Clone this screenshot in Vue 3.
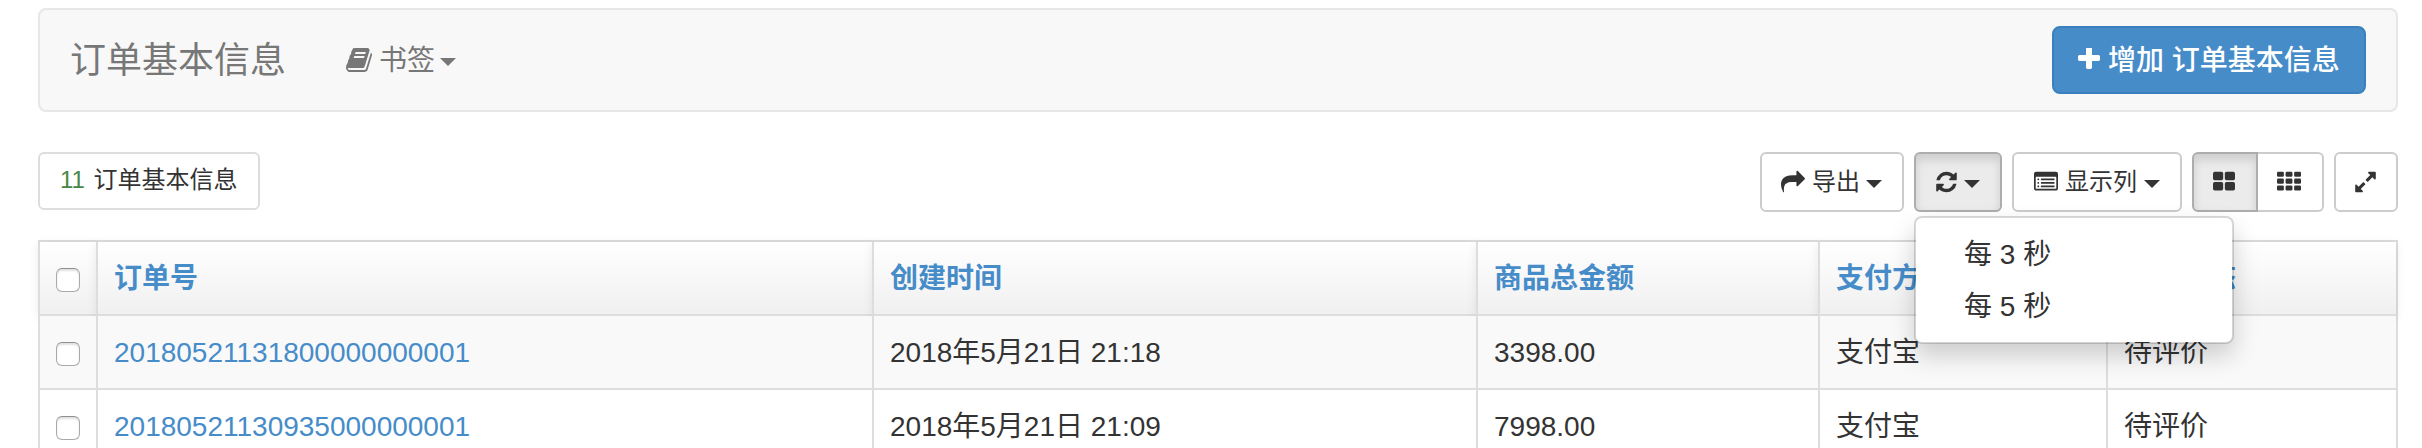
<script setup>
const columns = ['订单号', '创建时间', '商品总金额', '支付方式', '订单状态']
const orders = [
  { id: '20180521131800000000001', created: '2018年5月21日 21:18', total: '3398.00', pay: '支付宝', status: '待评价' },
  { id: '20180521130935000000001', created: '2018年5月21日 21:09', total: '7998.00', pay: '支付宝', status: '待评价' },
]
const intervals = ['每 3 秒', '每 5 秒']
</script>

<template>
  <div class="page">
    <nav class="navbar">
      <span class="brand">订单基本信息</span>
      <a class="bookmark">
        <svg class="ico-book" viewBox="64 0 1664 1792"><path d="M1703 478q40 57 18 129l-275 906q-19 64-76.500 107.500t-122.500 43.500h-923q-77 0-148.500-53.500t-99.500-131.500q-24-67-2-127 0-4 3-27t4-37q1-8-3-21.500t-3-19.500q2-11 8-21t16.500-23.500 16.500-23.500q23-38 45-91.500t30-91.500q3-10 .5-30t-.5-28q3-11 17-28t17-23q21-36 42-92t25-90q1-9-2.500-32t.5-28q4-13 22-30.500t22-22.500q19-26 42.500-84.500t27.500-96.500q1-8-3-25.500t-2-26.500q2-8 9-18t18-23 17-21q8-12 16.500-30.500t15-35 16-36 19.500-32 26.500-23.500 36-11.500 47.500 5.500l-1 3q38-9 51-9h761q74 0 114 56t18 130l-274 906q-36 119-71.500 153.500t-128.500 34.500h-869q-27 0-38 15-11 16-1 43 24 70 144 70h923q29 0 56-15.500t35-41.500l300-987q7-22 5-57 38 15 59 43zm-1064 2q-4 13 2 22.500t20 9.500h608q13 0 25.500-9.500t16.500-22.500l21-64q4-13-2-22.500t-20-9.500h-608q-13 0-25.500 9.500t-16.500 22.500zm-83 256q-4 13 2 22.500t20 9.500h608q13 0 25.500-9.500t16.500-22.500l21-64q4-13-2-22.500t-20-9.500h-608q-13 0-25.500 9.500t-16.500 22.500z" /></svg>
        <span class="bookmark-text">书签</span><i class="caret"></i>
      </a>
      <button class="add">
        <svg class="ico-plus" viewBox="192 192 1408 1408"><path d="M1600 736v192q0 40-28 68t-68 28h-416v416q0 40-28 68t-68 28h-192q-40 0-68-28t-28-68v-416h-416q-40 0-68-28t-28-68v-192q0-40 28-68t68-28h416v-416q0-40 28-68t68-28h192q40 0 68 28t28 68v416h416q40 0 68 28t28 68z" /></svg>
        <span class="add-text">增加 订单基本信息</span>
      </button>
    </nav>

    <div class="toolbar">
      <div class="count"><span class="num">11</span> 订单基本信息</div>
      <div class="tools">
        <button class="btn export">
          <svg class="w24" viewBox="0 0 1792 1792"><path d="M1792 640q0 26-19 45l-512 512q-19 19-45 19t-45-19-19-45v-256h-224q-98 0-175.500 6t-154 21.500-133 42.500-105.500 69.500-80 101-48.500 138.500-17.500 181q0 55 5 123 0 6 2.500 23.500t2.500 26.500q0 15-8.500 25t-23.500 10q-16 0-28-17-7-9-13-22t-13.500-30-10.500-24q-127-285-127-451 0-199 53-333 162-403 875-403h224v-256q0-26 19-45t45-19 45 19l512 512q19 19 19 45z" /></svg>
          <span class="label">导出</span><i class="caret"></i>
        </button>
        <div class="refresh-wrap">
          <button class="btn refresh active">
            <svg class="w21" viewBox="128 0 1536 1792"><path d="M1639 1056q0 5-1 7-64 268-268 434.500t-478 166.500q-146 0-282.500-55t-243.500-157l-129 129q-19 19-45 19t-45-19-19-45v-448q0-26 19-45t45-19h448q26 0 45 19t19 45-19 45l-137 137q71 66 161 102t187 36q134 0 250-65t186-179q11-17 53-117 8-23 30-23h192q13 0 22.500 9.500t9.500 22.500zm25-800v448q0 26-19 45t-45 19h-448q-26 0-45-19t-19-45 19-45l138-138q-148-137-349-137-134 0-250 65t-186 179q-11 17-53 117-8 23-30 23h-199q-13 0-22.500-9.500t-9.500-22.500v-7q65-268 270-434.500t480-166.500q146 0 284 55.500t245 156.500l130-129q19-19 45-19t45 19 19 45z" /></svg>
            <i class="caret"></i>
          </button>
          <ul class="menu">
            <li v-for="i in intervals" :key="i">{{ i }}</li>
          </ul>
        </div>
        <button class="btn columns">
          <svg class="w24" viewBox="0 0 1792 1792">
            <path fill-rule="evenodd" d="M160 128h1472q66 0 113 47t47 113v1088q0 66-47 113t-113 47h-1472q-66 0-113-47t-47-113v-1088q0-66 47-113t113-47zM160 512q-32 0-32 32v832q0 32 32 32h1472q32 0 32-32v-832q0-32-32-32z" />
            <g v-for="y in [640, 896, 1152]" :key="y">
              <rect x="256" :y="y" width="128" height="128" rx="32" />
              <rect x="512" :y="y" width="1024" height="128" rx="32" />
            </g>
          </svg>
          <span class="label">显示列</span><i class="caret"></i>
        </button>
        <div class="group">
          <button class="btn large active">
            <svg class="w22" viewBox="64 0 1664 1792">
              <template v-for="y in [128, 896]" :key="y">
                <rect v-for="x in [64, 960]" :key="x" :x="x" :y="y" width="768" height="640" rx="128" />
              </template>
            </svg>
          </button>
          <button class="btn small">
            <svg class="w24" viewBox="0 0 1792 1792">
              <template v-for="y in [128, 640, 1152]" :key="y">
                <rect v-for="x in [0, 640, 1280]" :key="x" :x="x" :y="y" width="512" height="384" rx="96" />
              </template>
            </svg>
          </button>
        </div>
        <button class="btn full">
          <svg class="w21" viewBox="128 0 1536 1792"><path d="M883 1056q0 13-10 23l-332 332 144 144q19 19 19 45t-19 45-45 19h-448q-26 0-45-19t-19-45v-448q0-26 19-45t45-19 45 19l144 144 332-332q10-10 23-10t23 10l114 114q10 10 10 23zm781-864v448q0 26-19 45t-45 19-45-19l-144-144-332 332q-10 10-23 10t-23-10l-114-114q-10-10-10-23t10-23l332-332-144-144q-19-19-19-45t19-45 45-19h448q26 0 45 19t19 45z" /></svg>
        </button>
      </div>
    </div>

    <div class="table">
      <div class="row head">
        <div class="cell check"><span class="box"></span></div>
        <div v-for="c in columns" :key="c" class="cell">{{ c }}</div>
      </div>
      <div v-for="o in orders" :key="o.id" class="row body">
        <div class="cell check"><span class="box"></span></div>
        <div class="cell"><a class="link">{{ o.id }}</a></div>
        <div class="cell">{{ o.created }}</div>
        <div class="cell">{{ o.total }}</div>
        <div class="cell">{{ o.pay }}</div>
        <div class="cell">{{ o.status }}</div>
      </div>
    </div>
  </div>
</template>

<style>
body { background: #fff; }
</style>

<style scoped>
* { box-sizing: border-box; }
.page {
  height: 448px;
  overflow: hidden;
  padding: 8px 24px 0 38px;
  font: 28px/40px "Liberation Sans", "Noto Sans CJK SC", sans-serif;
  color: #333;
}
svg { display: block; fill: currentColor; flex: none; }
button { font: inherit; margin: 0; padding: 0; }
.caret {
  width: 0;
  height: 0;
  border: 8px solid transparent;
  border-top-color: currentColor;
  border-bottom: 0;
}
.navbar {
  display: flex;
  align-items: center;
  height: 104px;
  padding: 0 30px;
  border: 2px solid #e7e7e7;
  border-radius: 8px;
  background: #f8f8f8;
  color: #777;
}
.brand { padding-top: 1px; font-size: 36px; white-space: nowrap; }
.bookmark { display: flex; align-items: center; margin-left: 60px; }
.ico-book { width: 26px; height: 28px; }
.bookmark-text { padding-top: 2px; margin: 0 5px 0 7px; }
.bookmark .caret { margin-top: 4px; }
.add {
  display: flex;
  align-items: center;
  width: 314px;
  height: 68px;
  margin-left: auto;
  padding: 0 24px;
  border: 2px solid #3a80bd;
  border-radius: 8px;
  background: #468cc9;
  color: #fff;
  font-weight: 500;
  white-space: nowrap;
}
.ico-plus { width: 22px; height: 22px; margin: -2px 8px 0 0; }
.add-text { padding-top: 2px; }
.toolbar {
  display: flex;
  justify-content: space-between;
  align-items: flex-start;
  height: 88px;
  margin-top: 40px;
  font-size: 24px;
}
.count {
  width: 222px;
  height: 58px;
  padding-left: 20px;
  border: 2px solid #ddd;
  border-radius: 6px;
  line-height: 52px;
  white-space: nowrap;
}
.num { margin-right: 2px; color: #468847; }
.tools { display: flex; gap: 10px; }
.btn {
  display: flex;
  align-items: center;
  height: 60px;
  padding: 0 20px;
  border: 2px solid #ccc;
  border-radius: 6px;
  background: #fff;
  color: #333;
  white-space: nowrap;
}
.btn.active {
  border-color: #adadad;
  background: #ebebeb;
  box-shadow: inset 0 6px 10px rgba(0, 0, 0, .125);
}
.btn svg { height: 24px; margin-top: -1px; }
.btn .caret { margin-top: 4px; }
.w24 { width: 24px; }
.w22 { width: 22px; }
.w21 { width: 21px; }
.label { margin: 0 7px; }
.export { width: 144px; padding-left: 19px; }
.export .caret { margin-left: -1px; }
.refresh { width: 88px; }
.refresh .caret { margin-left: 7px; }
.columns { width: 170px; }
.group { display: flex; }
.large { width: 66px; padding-left: 19px; border-radius: 6px 0 0 6px; }
.small { width: 66px; padding-left: 19px; border-left: 0; border-radius: 0 6px 6px 0; }
.full { width: 64px; padding-left: 19px; }
.refresh-wrap { position: relative; }
.menu {
  position: absolute;
  top: 64px;
  left: 0;
  z-index: 5;
  width: 320px;
  margin: 0;
  padding: 10px 0;
  list-style: none;
  border: 2px solid rgba(0, 0, 0, .15);
  border-radius: 8px;
  background: #fff;
  background-clip: padding-box;
  box-shadow: 0 12px 24px rgba(0, 0, 0, .175);
  font-size: 28px;
}
.menu li { height: 52px; padding-left: 48px; line-height: 54px; }
.table { border-top: 2px solid #ddd; border-right: 2px solid #ddd; }
.row {
  display: grid;
  grid-template-columns: 58px 776px 604px 342px 288px 290px;
  height: 74px;
}
.cell {
  padding-left: 16px;
  border-left: 2px solid #ddd;
  border-bottom: 2px solid #ddd;
  line-height: 74px;
  height: 74px;
  background: #fff;
  white-space: nowrap;
}
.head .cell {
  background: linear-gradient(#fff, #f0f0f0);
  box-shadow: 0 2px 10px rgba(0, 0, 0, .08);
  color: #468cc9;
  font-weight: 700;
}
.body { position: relative; }
.body:nth-child(2) .cell { background: #f9f9f9; }
.link { color: #468cc9; }
.cell.check { padding: 26px 0 0 16px; }
.box {
  display: block;
  width: 24px;
  height: 24px;
  border: 1px solid #aaa;
  border-top-color: #8f8f8f;
  border-radius: 6px;
  background: #fff;
  box-shadow: inset 0 2px 2px rgba(0, 0, 0, .12);
}
</style>
